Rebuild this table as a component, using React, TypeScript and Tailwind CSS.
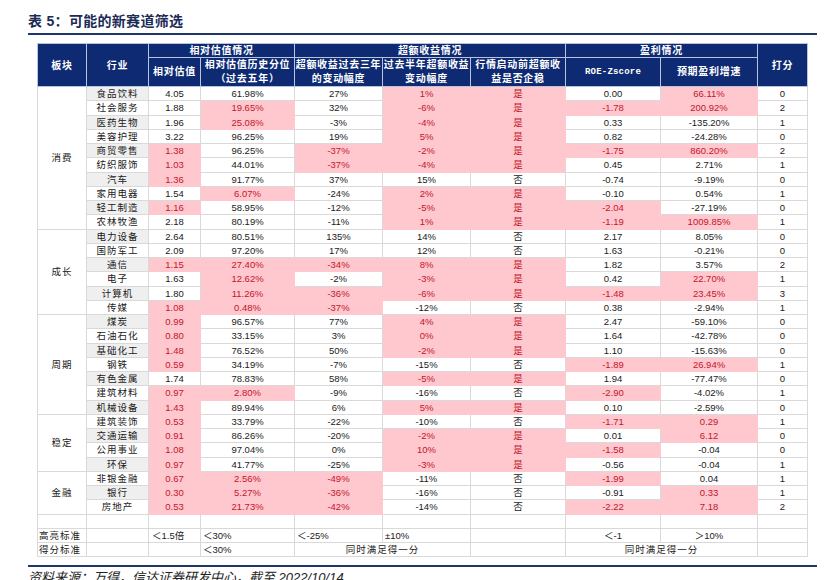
import clsx from "clsx";

type Row = { name: string; v: string[]; score: number };

// "*" marks a highlighted (pink) cell
const groups: { label: string; rows: Row[] }[] = [
  {
    label: "消费",
    rows: [
      { name: "食品饮料", v: ["4.05", "61.98%", "27%", "*1%", "*是", "0.00", "*66.11%"], score: 0 },
      { name: "社会服务", v: ["1.88", "*19.65%", "32%", "*-6%", "*是", "*-1.78", "*200.92%"], score: 2 },
      { name: "医药生物", v: ["1.96", "*25.08%", "-3%", "*-4%", "*是", "0.33", "-135.20%"], score: 1 },
      { name: "美容护理", v: ["3.22", "96.25%", "19%", "*5%", "*是", "0.82", "-24.28%"], score: 0 },
      { name: "商贸零售", v: ["*1.38", "96.25%", "*-37%", "*-2%", "*是", "*-1.75", "*860.20%"], score: 2 },
      { name: "纺织服饰", v: ["*1.03", "44.01%", "*-37%", "*-4%", "*是", "0.45", "2.71%"], score: 1 },
      { name: "汽车", v: ["*1.36", "91.77%", "37%", "15%", "否", "-0.74", "-9.19%"], score: 0 },
      { name: "家用电器", v: ["1.54", "*6.07%", "-24%", "*2%", "*是", "-0.10", "0.54%"], score: 1 },
      { name: "轻工制造", v: ["*1.16", "58.95%", "-12%", "*-5%", "*是", "*-2.04", "-27.19%"], score: 0 },
      { name: "农林牧渔", v: ["2.18", "80.19%", "-11%", "*1%", "*是", "*-1.19", "*1009.85%"], score: 1 },
    ],
  },
  {
    label: "成长",
    rows: [
      { name: "电力设备", v: ["2.64", "80.51%", "135%", "14%", "否", "2.17", "8.05%"], score: 0 },
      { name: "国防军工", v: ["2.09", "97.20%", "17%", "12%", "否", "1.63", "-0.21%"], score: 0 },
      { name: "通信", v: ["*1.15", "*27.40%", "*-34%", "*8%", "*是", "1.82", "3.57%"], score: 2 },
      { name: "电子", v: ["1.63", "*12.62%", "-2%", "*-3%", "*是", "0.42", "*22.70%"], score: 1 },
      { name: "计算机", v: ["1.80", "*11.26%", "*-36%", "*-6%", "*是", "*-1.48", "*23.45%"], score: 3 },
      { name: "传媒", v: ["*1.08", "*0.48%", "*-37%", "-12%", "否", "0.38", "-2.94%"], score: 1 },
    ],
  },
  {
    label: "周期",
    rows: [
      { name: "煤炭", v: ["*0.99", "96.57%", "77%", "*4%", "*是", "2.47", "-59.10%"], score: 0 },
      { name: "石油石化", v: ["*0.80", "33.15%", "3%", "*0%", "*是", "1.64", "-42.78%"], score: 0 },
      { name: "基础化工", v: ["*1.48", "76.52%", "50%", "*-2%", "*是", "1.10", "-15.63%"], score: 0 },
      { name: "钢铁", v: ["*0.59", "34.19%", "-7%", "-15%", "否", "*-1.89", "*26.94%"], score: 1 },
      { name: "有色金属", v: ["1.74", "78.83%", "58%", "*-5%", "*是", "1.94", "-77.47%"], score: 0 },
      { name: "建筑材料", v: ["*0.97", "*2.80%", "-9%", "-16%", "否", "*-2.90", "-4.02%"], score: 1 },
      { name: "机械设备", v: ["*1.43", "89.94%", "6%", "*5%", "*是", "0.10", "-2.59%"], score: 0 },
    ],
  },
  {
    label: "稳定",
    rows: [
      { name: "建筑装饰", v: ["*0.53", "33.79%", "-22%", "-10%", "否", "*-1.71", "*0.29"], score: 1 },
      { name: "交通运输", v: ["*0.91", "86.26%", "-20%", "*-2%", "*是", "0.01", "*6.12"], score: 0 },
      { name: "公用事业", v: ["*1.08", "97.04%", "0%", "*10%", "*是", "*-1.58", "-0.04"], score: 0 },
      { name: "环保", v: ["*0.97", "41.77%", "-25%", "*-3%", "*是", "-0.56", "-0.04"], score: 1 },
    ],
  },
  {
    label: "金融",
    rows: [
      { name: "非银金融", v: ["*0.67", "*2.56%", "*-49%", "-11%", "否", "*-1.99", "0.04"], score: 1 },
      { name: "银行", v: ["*0.30", "*5.27%", "*-36%", "-16%", "否", "-0.91", "*0.33"], score: 1 },
      { name: "房地产", v: ["*0.53", "*21.73%", "*-42%", "-14%", "否", "*-2.22", "*7.18"], score: 2 },
    ],
  },
];

const grid = "border border-[#d9d9d9]";
const head = "border border-[#b9c3dc] bg-[#0e2a72] text-white font-bold text-[10px] tracking-[0.7px] p-0 text-center align-middle";

function Cell({ value }: { value: string }) {
  const hot = value.startsWith("*");
  const text = hot ? value.slice(1) : value;
  return (
    <td
      className={clsx(
        "border p-0 text-center text-[9.5px]",
        hot ? "bg-[#ffc7ce] text-[#c3162c] border-[#ffc7ce]" : "border-[#d9d9d9] text-[#1a1a1a]"
      )}
    >
      {text}
    </td>
  );
}

export default function App() {
  let idx = 0;
  return (
    <div className="w-[834px] h-[580px] overflow-hidden bg-white pl-[28px] pt-[11px] font-['Liberation_Sans','Noto_Sans_CJK_SC',sans-serif]">
      <p className="w-[789px] h-[24px] border-b-2 border-[#1f3668] text-[14px] leading-[20px] font-bold tracking-[0.3px] text-[#1b2b55]">
        表 5：可能的新赛道筛选
      </p>

      <table className="mt-[8px] ml-[9px] w-[770px] table-fixed border-collapse leading-[13px]">
        <colgroup>
          <col className="w-[49px]" />
          <col className="w-[62px]" />
          <col className="w-[52px]" />
          <col className="w-[94px]" />
          <col className="w-[88px]" />
          <col className="w-[88px]" />
          <col className="w-[95px]" />
          <col className="w-[95px]" />
          <col className="w-[97px]" />
          <col className="w-[50px]" />
        </colgroup>
        <thead>
          <tr className="h-[14px]">
            <th rowSpan={2} className={head}>板块</th>
            <th rowSpan={2} className={head}>行业</th>
            <th colSpan={2} className={head}>相对估值情况</th>
            <th colSpan={3} className={head}>超额收益情况</th>
            <th colSpan={2} className={head}>盈利情况</th>
            <th rowSpan={2} className={head}>打分</th>
          </tr>
          <tr className="h-[28px] leading-[14px]">
            <th className={head}>相对估值</th>
            <th className={head}>
              相对估值历史分位
              <br />
              （过去五年）
            </th>
            <th className={head}>
              超额收益过去三年
              <br />
              的变动幅度
            </th>
            <th className={head}>
              过去半年超额收益
              <br />
              变动幅度
            </th>
            <th className={head}>
              行情启动前超额收
              <br />
              益是否企稳
            </th>
            <th className={clsx(head, "font-['Liberation_Mono',monospace] !text-[9px] !tracking-[0.2px]")}>ROE-Zscore</th>
            <th className={head}>预期盈利增速</th>
          </tr>
        </thead>
        <tbody>
          {groups.map((g) =>
            g.rows.map((r, i) => {
              const shade = idx++ % 2 === 0;
              return (
                <tr key={r.name} className="h-[14.25px]">
                  {i === 0 && (
                    <td rowSpan={g.rows.length} className={clsx(grid, "p-0 text-center text-[9.5px] tracking-[1px] text-[#1a1a1a]")}>
                      {g.label}
                    </td>
                  )}
                  <td
                    className={clsx(
                      grid,
                      "p-0 text-center text-[9.5px] tracking-[1px] text-[#1a1a1a]",
                      shade ? "bg-[#efefef]" : "bg-white"
                    )}
                  >
                    {r.name}
                  </td>
                  {r.v.map((val, k) => (
                    <Cell key={k} value={val} />
                  ))}
                  <td className={clsx(grid, "p-0 text-center text-[9.5px] text-[#1a1a1a]")}>{r.score}</td>
                </tr>
              );
            })
          )}
          <tr className="h-[14.25px]">
            {Array.from({ length: 10 }).map((_, k) => (
              <td key={k} className={clsx(grid, "p-0")} />
            ))}
          </tr>
          <tr className="h-[14.25px] text-[9.5px] text-[#1a1a1a]">
            <td className={clsx(grid, "p-0 pl-[1px] text-left tracking-[1px]")}>高亮标准</td>
            <td className={clsx(grid, "p-0")} />
            <td className={clsx(grid, "p-0 pl-[3px] text-left")}>＜1.5倍</td>
            <td className={clsx(grid, "p-0 pl-[2px] text-left")}>＜30%</td>
            <td className={clsx(grid, "p-0 pl-[2px] text-left")}>＜-25%</td>
            <td className={clsx(grid, "p-0 pl-[2px] text-left")}>±10%</td>
            <td className={clsx(grid, "p-0")} />
            <td className={clsx(grid, "p-0 text-center")}>＜-1</td>
            <td className={clsx(grid, "p-0 text-center")}>＞10%</td>
            <td className={clsx(grid, "p-0")} />
          </tr>
          <tr className="h-[14.25px] text-[9.5px] text-[#1a1a1a]">
            <td className={clsx(grid, "p-0 pl-[1px] text-left tracking-[1px]")}>得分标准</td>
            <td className={clsx(grid, "p-0")} />
            <td className={clsx(grid, "p-0")} />
            <td className={clsx(grid, "p-0 pl-[2px] text-left")}>＜30%</td>
            <td colSpan={2} className={clsx(grid, "p-0 text-center tracking-[1px]")}>同时满足得一分</td>
            <td className={clsx(grid, "p-0")} />
            <td colSpan={2} className={clsx(grid, "p-0 text-center tracking-[1px]")}>同时满足得一分</td>
            <td className={clsx(grid, "p-0")} />
          </tr>
        </tbody>
      </table>

      <div className="mt-[8px] w-[789px] h-[2px] bg-[#1f3668]" />
      <p className="mt-[3px] text-[13px] leading-[16px] italic text-[#222]">
        资料来源：万得，信达证券研发中心，截至 2022/10/14
      </p>
    </div>
  );
}
